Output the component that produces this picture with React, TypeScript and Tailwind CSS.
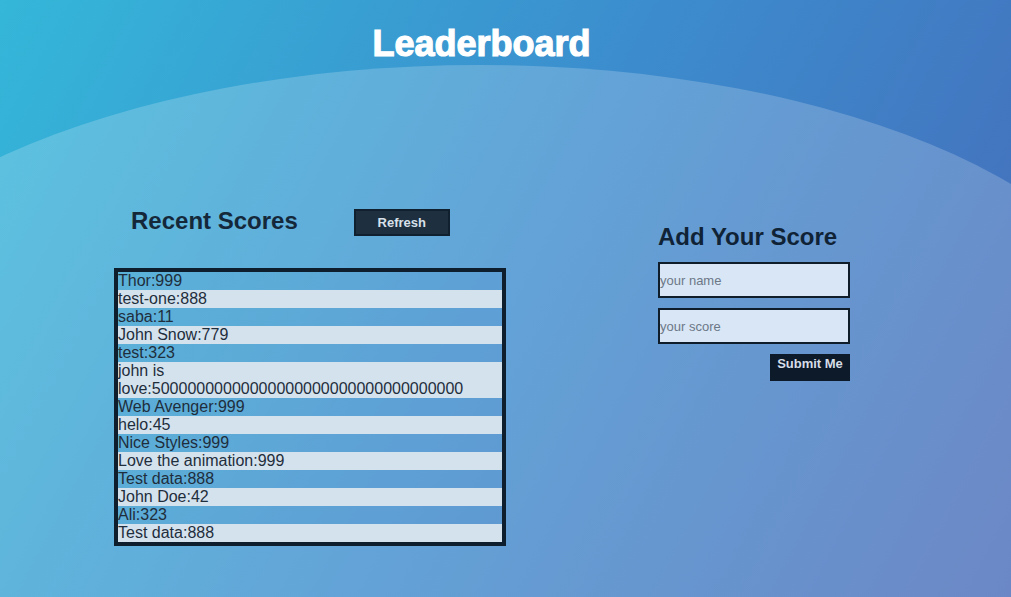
const scores = [
  "Thor:999",
  "test-one:888",
  "saba:11",
  "John Snow:779",
  "test:323",
  "john is love:50000000000000000000000000000000000",
  "Web Avenger:999",
  "helo:45",
  "Nice Styles:999",
  "Love the animation:999",
  "Test data:888",
  "John Doe:42",
  "Ali:323",
  "Test data:888",
];

export default function App() {
  return (
    <div className="relative h-[597px] w-full overflow-hidden bg-[linear-gradient(118deg,#34b7d9_0%,#3c8ccd_50%,#476ab8_100%)] font-['Liberation_Sans',Arial,sans-serif]">
      {/* soft light dome behind the content */}
      <div className="pointer-events-none absolute left-[-190px] top-[65px] h-[900px] w-[1340px] rounded-tl-[670px_305px] rounded-tr-[670px_305px] bg-white/20" />

      <div className="relative">
        <h1 className="w-[963px] pt-[23px] text-center text-[36px] leading-[41px] font-bold text-white [-webkit-text-stroke:1.2px_white]">
          Leaderboard
        </h1>

        <div className="mt-[141px] flex">
          {/* recent scores */}
          <div className="ml-[114px] w-[392px]">
            <div className="flex items-start">
              <h2 className="pl-[17px] pt-[2px] text-[24px] leading-[28px] font-bold text-[#14283a]">Recent Scores</h2>
              <button className="ml-[56px] mt-[4px] h-[27px] w-[96px] border-2 border-[#11202f] bg-[#1e2f40] text-[13px] font-bold text-[#d8e1ea]">
                Refresh
              </button>
            </div>
            <ul className="mt-[32px] border-4 border-[#0e1e2c] text-[16px] leading-[18px] text-[#1f2e3c]">
              {scores.map((s, i) => (
                <li key={i} className={i % 2 === 0 ? "bg-[#1060b0]/5" : "bg-[#d4e2ee]"}>
                  {s}
                </li>
              ))}
            </ul>
          </div>

          {/* add score form */}
          <div className="ml-[152px] mt-[18px] flex w-[192px] flex-col">
            <h2 className="text-[24px] leading-[28px] font-bold text-[#102336]">Add Your Score</h2>
            <input
              placeholder="your name"
              className="mt-[11px] h-[36px] border-2 border-[#0f1d2b] bg-[#d8e6f6] px-0 text-[13px] text-[#1b2b3a] outline-none placeholder:text-[#6c7886]"
            />
            <input
              placeholder="your score"
              className="mt-[10px] h-[36px] border-2 border-[#0f1d2b] bg-[#d8e6f6] px-0 text-[13px] text-[#1b2b3a] outline-none placeholder:text-[#6c7886]"
            />
            <button className="mt-[10px] self-end h-[27px] w-[80px] bg-[#0d1a29] pb-[8px] text-[13px] font-bold text-[#d6dee8]">
              Submit Me
            </button>
          </div>
        </div>
      </div>
    </div>
  );
}
